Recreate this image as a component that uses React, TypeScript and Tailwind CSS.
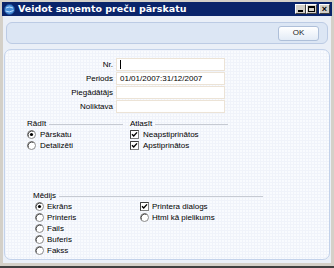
import React from 'react';

function Radio({ checked = false }: { checked?: boolean }) {
  return (
    <svg width="9" height="9" viewBox="0 0 9 9" className="shrink-0">
      <circle cx="4.5" cy="4.5" r="4" fill="#ffffff" stroke="#8a8a8a" strokeWidth="1" />
      <path d="M1.3 6.5 A4 4 0 0 1 6.5 1.3" fill="none" stroke="#404040" strokeWidth="1" />
      {checked && <circle cx="4.5" cy="4.5" r="1.6" fill="#000000" />}
    </svg>
  );
}

function Check({ checked = false }: { checked?: boolean }) {
  return (
    <svg width="9" height="9" viewBox="0 0 9 9" className="shrink-0">
      <rect x="0.5" y="0.5" width="8" height="8" fill="#ffffff" stroke="#808080" />
      <path d="M0.5 8.5 V0.5 H8.5" fill="none" stroke="#404040" />
      {checked && <path d="M2 4.2 L3.7 6 L7 2.4" fill="none" stroke="#000000" strokeWidth="1.4" />}
    </svg>
  );
}

function SectionHead({ title, className = '' }: { title: string; className?: string }) {
  return (
    <div className={`flex items-center h-[10px] ${className}`}>
      <span>{title}</span>
      <div className="flex-1 ml-[3px] h-[2px] border-t border-[#c6cad2] border-b-white mt-[2px]" />
    </div>
  );
}

function Field({ label, value, cursor }: { label: string; value?: string; cursor?: boolean }) {
  return (
    <div className="flex items-center h-[13px] mb-[1px]">
      <div className="w-[108px] text-right">{label}</div>
      <div className="ml-[3px] w-[109px] h-[13px] bg-white border border-[#ece3d6] flex items-center px-[3px]">
        {cursor && <div className="w-px h-[9px] bg-black" />}
        {value}
      </div>
    </div>
  );
}

function Option({ type, checked, label, gap = 'ml-[4px]' }: { type: 'radio' | 'check'; checked?: boolean; label: string; gap?: string }) {
  return (
    <div className="flex items-center h-[11px]">
      {type === 'radio' ? <Radio checked={checked} /> : <Check checked={checked} />}
      <span className={gap}>{label}</span>
    </div>
  );
}

export default function App() {
  return (
    <div
      className="w-[334px] h-[268px] bg-[#d4d0c8] flex flex-col p-[2px] pb-0 border-b-2 border-[#404040] text-[8px] text-black"
      style={{ fontFamily: '"Liberation Sans", Arial, sans-serif' }}
    >
      {/* Title bar */}
      <div className="h-[14px] bg-[#0a246a] flex items-center pl-[2px] pr-[2px] shrink-0">
        <svg width="11" height="11" viewBox="0 0 11 11">
          <circle cx="5.5" cy="5.5" r="5" fill="#4a8fd8" stroke="#1c4f9a" />
          <path d="M2 4 Q5 2 9 4 M1.5 7 Q5 9 9.5 6.5" fill="none" stroke="#bfe0ff" strokeWidth="1" />
        </svg>
        <span className="ml-[3px] text-white font-bold text-[9.5px]" style={{ fontFamily: '"DejaVu Sans", Verdana, sans-serif' }}>
          Veidot saņemto preču pārskatu
        </span>
        <div className="ml-auto flex items-center gap-0">
          <div className="w-[11px] h-[10px] bg-[#d4d0c8] border border-t-white border-l-white border-r-[#404040] border-b-[#404040] flex items-end justify-center pb-[1px]">
            <div className="w-[5px] h-[2px] bg-black" />
          </div>
          <div className="w-[11px] h-[10px] bg-[#d4d0c8] border border-t-white border-l-white border-r-[#404040] border-b-[#404040] flex items-center justify-center">
            <div className="w-[7px] h-[6px] border border-black border-t-2" />
          </div>
          <div className="ml-[2px] w-[11px] h-[10px] bg-[#d4d0c8] border border-t-white border-l-white border-r-[#404040] border-b-[#404040] flex items-center justify-center text-[9px] font-bold leading-none">
            ×
          </div>
        </div>
      </div>

      {/* Body */}
      <div className="flex-1 bg-[#d4d0c8] px-[1px] pb-[3px] flex flex-col">
        <div className="flex-1 bg-[#eaeff7] flex flex-col px-[1px] pt-[6px] pb-[3px]">
          {/* Toolbar */}
          <div className="mx-[2px] h-[22px] rounded-[6px] border border-[#bccbe4] bg-[#dce6f4] flex items-center justify-end pr-[8px]">
            <button className="w-[41px] h-[15px] rounded-[3px] border border-[#aebfd9] bg-gradient-to-b from-white to-[#e3ebf6] text-[8px] leading-none text-[#222]">
              OK
            </button>
          </div>

          {/* Main panel */}
          <div className="mt-[5px] flex-1 rounded-[7px] border border-[#c3d2ea] bg-[#f9fbfe] bg-[linear-gradient(#f0f3fa_1px,transparent_1px),linear-gradient(90deg,#f0f3fa_1px,transparent_1px)] bg-[length:3px_3px] flex flex-col">
            <div className="mt-[8px]">
              <Field label="Nr." cursor />
              <Field label="Periods" value="01/01/2007:31/12/2007" />
              <Field label="Piegādātājs" />
              <Field label="Noliktava" />
            </div>

            <div className="mt-[5px] flex">
              <div className="ml-[22px] w-[96px]">
                <SectionHead title="Rādīt" />
                <Option type="radio" checked label="Pārskatu" />
                <Option type="radio" label="Detalizēti" />
              </div>
              <div className="ml-[7px] w-[98px]">
                <SectionHead title="Atlasīt" />
                <Option type="check" checked label="Neapstiprinātos" />
                <Option type="check" checked label="Apstiprinātos" />
              </div>
            </div>

            <div className="mt-[40px] ml-[28px] w-[230px]">
              <SectionHead title="Mēdijs" />
              <div className="flex">
                <div className="ml-[2px] w-[105px]">
                  <Option type="radio" checked label="Ekrāns" gap="ml-[3px]" />
                  <Option type="radio" label="Printeris" gap="ml-[3px]" />
                  <Option type="radio" label="Fails" gap="ml-[3px]" />
                  <Option type="radio" label="Buferis" gap="ml-[3px]" />
                  <Option type="radio" label="Fakss" gap="ml-[3px]" />
                </div>
                <div>
                  <Option type="check" checked label="Printera dialogs" gap="ml-[3px]" />
                  <Option type="radio" label="Html kā pielikums" gap="ml-[3px]" />
                </div>
              </div>
            </div>
          </div>
        </div>
      </div>
    </div>
  );
}
